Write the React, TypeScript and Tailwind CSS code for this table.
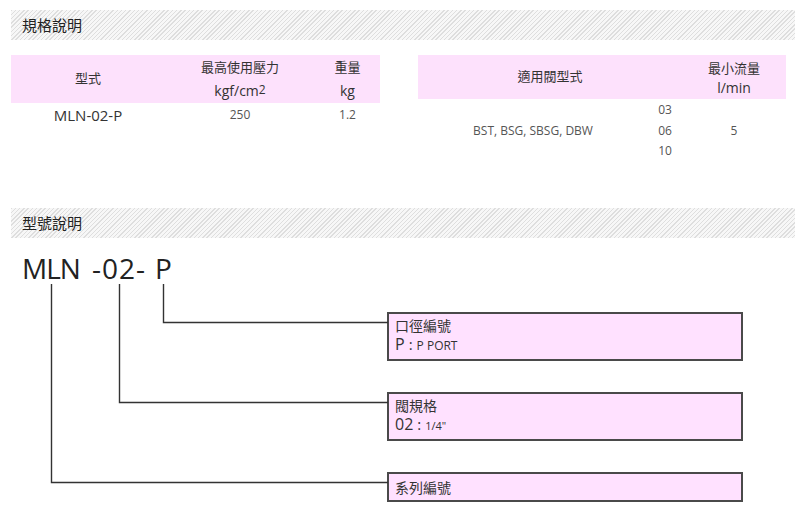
import React from "react";

const cjk = { fontFamily: '"Open Sans", "Noto Sans CJK TC", sans-serif' };

function SectionHeader({ title }: { title: string }) {
  return (
    <div className="ml-[11px] w-[784px] h-[30px] flex items-center pl-[11px] bg-[repeating-linear-gradient(135deg,#dedede_0px,#dedede_1px,#f7f7f7_1px,#f7f7f7_3px)]">
      <span className="text-[15px] text-[#222] leading-none">{title}</span>
    </div>
  );
}

export default function App() {
  return (
    <div className="relative w-[800px] h-[517px] bg-white overflow-hidden" style={cjk}>
      <div className="h-[10px]" />
      <SectionHeader title="規格說明" />

      {/* tables */}
      <div className="flex mt-[15px] h-[153px] items-start">
        <div className="ml-[11px] w-[369px]">
          <div className="grid grid-cols-[154px_150px_65px] h-[48px] bg-[#fde1fc] text-[#333] text-[13px]">
            <div className="flex items-center justify-center">型式</div>
            <div className="flex flex-col items-center justify-center leading-[23px]">
              <div>最高使用壓力</div>
              <div className="text-[14px]">
                kgf/cm<sup className="text-[12px] relative -top-[2px]">2</sup>
              </div>
            </div>
            <div className="flex flex-col items-center justify-center leading-[23px]">
              <div>重量</div>
              <div className="text-[14px]">kg</div>
            </div>
          </div>
          <div className="grid grid-cols-[154px_150px_65px] h-[24px] items-center">
            <div className="text-center text-[15px] text-[#333]">MLN-02-P</div>
            <div className="text-center text-[12px] text-[#555]">250</div>
            <div className="text-center text-[12px] text-[#555]">1.2</div>
          </div>
        </div>

        <div className="ml-[38px] w-[368px]">
          <div className="grid grid-cols-[264px_104px] h-[44px] bg-[#fde1fc] text-[#333] text-[13px]">
            <div className="flex items-center justify-center">適用閥型式</div>
            <div className="flex flex-col items-center justify-center leading-[20px] pt-[2px]">
              <div>最小流量</div>
              <div className="text-[14px]">l/min</div>
            </div>
          </div>
          <div className="grid grid-cols-[230px_34px_104px] text-[12px] text-[#555] pt-[1px]">
            <div className="flex items-center justify-center">BST, BSG, SBSG, DBW</div>
            <div className="flex flex-col items-center leading-[20.5px]">
              <div>03</div>
              <div>06</div>
              <div>10</div>
            </div>
            <div className="flex items-center justify-center">5</div>
          </div>
        </div>
      </div>

      <SectionHeader title="型號說明" />

      {/* model code */}
      <div
        className="flex mt-[12px] h-[36px] leading-[36px] text-[28px] text-[#222] font-medium"
        style={{ fontFamily: '"Open Sans", sans-serif' }}
      >
        <span className="ml-[22px] w-[70px] tracking-[-1px]">MLN</span>
        <span className="w-[63px] tracking-[1px]">-02-</span>
        <span>P</span>
      </div>

      {/* boxes */}
      <div className="ml-[387px] mt-[26px] w-[356px] flex flex-col gap-[31px] text-[#333]">
        <div className="h-[49px] border-2 border-[#4a4a4a] bg-[#ffe1ff] px-[6px] pt-[2px] leading-[19px]">
          <div className="text-[14px]">口徑編號</div>
          <div className="flex items-baseline">
            <span className="text-[16px]">P</span>
            <span className="text-[15px] ml-[4px] mr-[4px]">:</span>
            <span className="text-[12px]">P PORT</span>
          </div>
        </div>
        <div className="h-[49px] border-2 border-[#4a4a4a] bg-[#ffe1ff] px-[6px] pt-[2px] leading-[19px]">
          <div className="text-[14px]">閥規格</div>
          <div className="flex items-baseline">
            <span className="text-[16px]">02</span>
            <span className="text-[15px] ml-[4px] mr-[4px]">:</span>
            <span className="text-[11px]">1/4"</span>
          </div>
        </div>
        <div className="h-[30px] border-2 border-[#4a4a4a] bg-[#ffe1ff] px-[6px] flex items-center">
          <span className="text-[14px]">系列編號</span>
        </div>
      </div>

      {/* connector lines */}
      <svg className="absolute left-0 top-0 pointer-events-none" width="800" height="517">
        <g stroke="#333" strokeWidth="1.4" fill="none">
          <polyline points="163.5,284 163.5,322.5 388,322.5" />
          <polyline points="119.5,284 119.5,402.5 388,402.5" />
          <polyline points="51.5,284 51.5,482.5 388,482.5" />
        </g>
      </svg>
    </div>
  );
}
